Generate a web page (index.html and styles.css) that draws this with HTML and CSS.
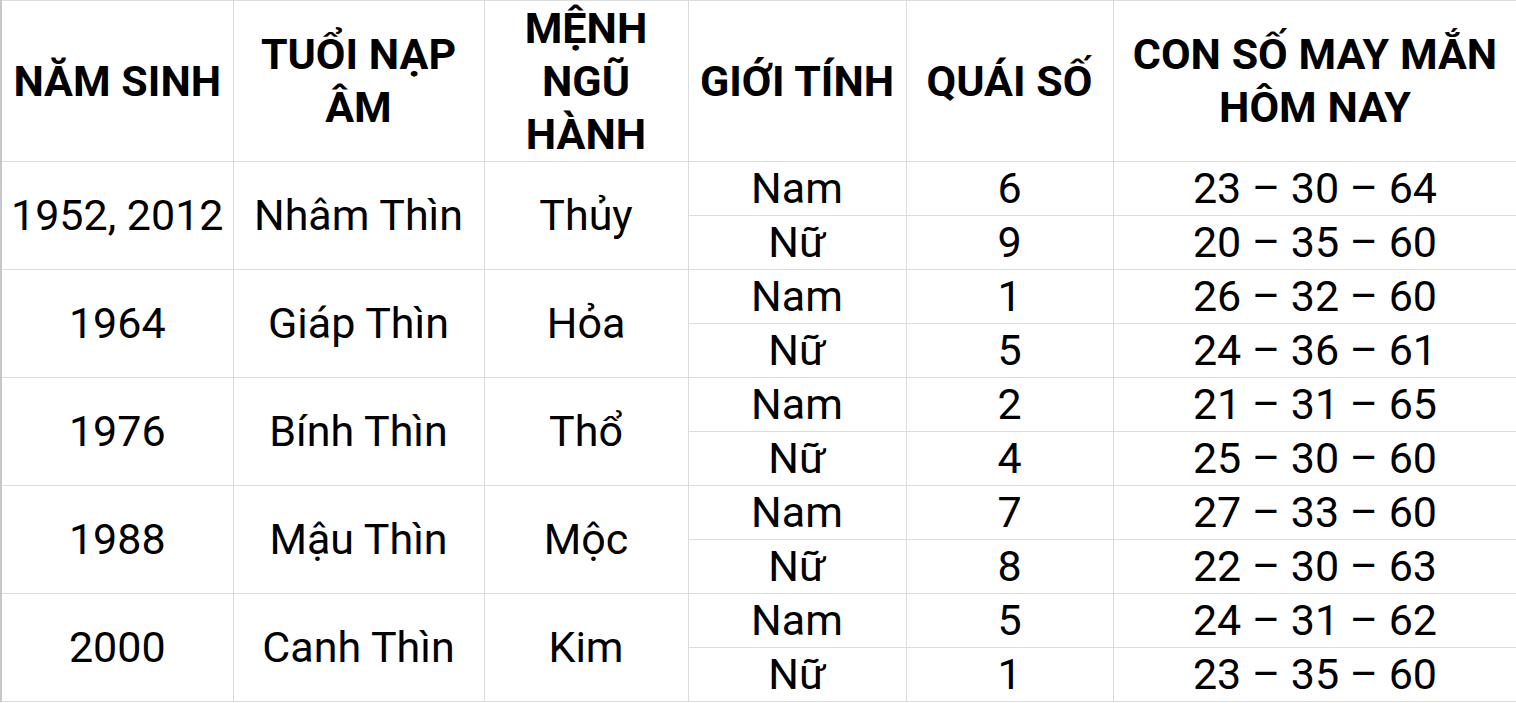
FILE: index.html
```html
<!DOCTYPE html>
<html lang="vi">
<head>
<meta charset="utf-8">
<link rel="stylesheet" href="styles.css">
</head>
<body>
<table class="grid">
  <colgroup>
    <col class="c1"><col class="c2"><col class="c3"><col class="c4"><col class="c5"><col class="c6">
  </colgroup>
  <thead>
    <tr>
      <th class="first">NĂM SINH</th>
      <th>TUỔI NẠP<br>ÂM</th>
      <th>MỆNH<br>NGŨ<br>HÀNH</th>
      <th>GIỚI TÍNH</th>
      <th>QUÁI SỐ</th>
      <th>CON SỐ MAY MẮN<br>HÔM NAY</th>
    </tr>
  </thead>
  <tbody>
    <tr><td class="first" rowspan="2">1952, 2012</td><td rowspan="2">Nhâm Thìn</td><td rowspan="2">Thủy</td><td>Nam</td><td>6</td><td>23 – 30 – 64</td></tr>
    <tr><td>Nữ</td><td>9</td><td>20 – 35 – 60</td></tr>
    <tr><td class="first" rowspan="2">1964</td><td rowspan="2">Giáp Thìn</td><td rowspan="2">Hỏa</td><td>Nam</td><td>1</td><td>26 – 32 – 60</td></tr>
    <tr><td>Nữ</td><td>5</td><td>24 – 36 – 61</td></tr>
    <tr><td class="first" rowspan="2">1976</td><td rowspan="2">Bính Thìn</td><td rowspan="2">Thổ</td><td>Nam</td><td>2</td><td>21 – 31 – 65</td></tr>
    <tr><td>Nữ</td><td>4</td><td>25 – 30 – 60</td></tr>
    <tr><td class="first" rowspan="2">1988</td><td rowspan="2">Mậu Thìn</td><td rowspan="2">Mộc</td><td>Nam</td><td>7</td><td>27 – 33 – 60</td></tr>
    <tr><td>Nữ</td><td>8</td><td>22 – 30 – 63</td></tr>
    <tr><td class="first" rowspan="2">2000</td><td rowspan="2">Canh Thìn</td><td rowspan="2">Kim</td><td>Nam</td><td>5</td><td>24 – 31 – 62</td></tr>
    <tr><td>Nữ</td><td>1</td><td>23 – 35 – 60</td></tr>
  </tbody>
</table>
</body>
</html>
```

FILE: styles.css
```css
html, body {
  margin: 0;
  padding: 0;
  background: #ffffff;
}

.grid {
  border-collapse: collapse;
  table-layout: fixed;
  width: 1516px;
  font-family: Roboto, "Noto Sans", sans-serif;
  color: #000000;
}

.c1 { width: 232px; }
.c2 { width: 251px; }
.c3 { width: 204px; }
.c4 { width: 218px; }
.c5 { width: 207px; }
.c6 { width: 404px; }

.grid th,
.grid td {
  border: 1px solid #dcdcdc;
  padding: 0;
  text-align: center;
  vertical-align: middle;
  white-space: nowrap;
}

.grid th {
  height: 160px;
  font-size: 43px;
  font-weight: 700;
  line-height: 53px;
}

.grid td {
  height: 53px;
  font-size: 43px;
  font-weight: 400;
  line-height: 53px;
}

.grid .first {
  border-left: 2px solid #c8c8c8;
}
```
